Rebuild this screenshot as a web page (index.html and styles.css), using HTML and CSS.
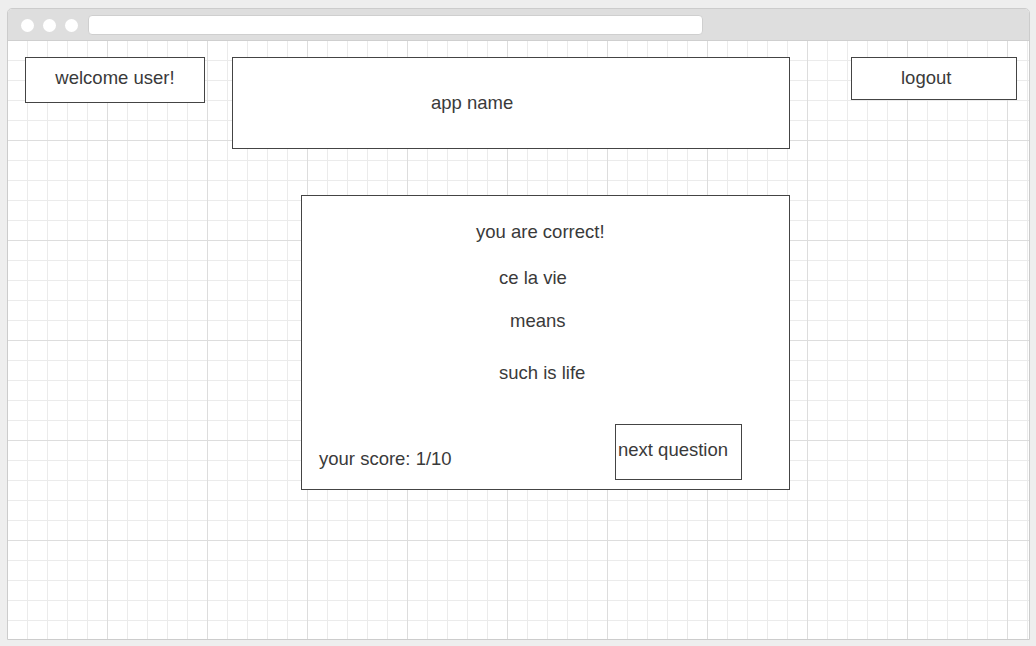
FILE: index.html
```html
<!DOCTYPE html>
<html lang="en">
<head>
<meta charset="utf-8">
<title>app name</title>
<link rel="stylesheet" href="styles.css">
</head>
<body>
<div class="window">
  <div class="titlebar">
    <div class="dots">
      <span class="dot"></span>
      <span class="dot"></span>
      <span class="dot"></span>
    </div>
    <div class="address"></div>
  </div>
  <div class="canvas">
    <header class="header">
      <div class="box welcome">welcome user!</div>
      <div class="box appname">app name</div>
      <div class="box logout">logout</div>
    </header>
    <section class="card">
      <div class="line l1">you are correct!</div>
      <div class="line l2">ce la vie</div>
      <div class="line l3">means</div>
      <div class="line l4">such is life</div>
      <div class="bottom">
        <div class="line score">your score: 1/10</div>
        <div class="box next">next question</div>
      </div>
    </section>
  </div>
</div>
</body>
</html>
```

FILE: styles.css
```css
* { box-sizing: border-box; }

html, body {
  margin: 0;
  padding: 0;
  background: #eeeeee;
}

body {
  font-family: "Liberation Sans", Arial, sans-serif;
  font-size: 18.5px;
  line-height: 20px;
  color: #3a3a3a;
}

.window {
  margin: 8px 0 0 7px;
  width: 1023px;
  height: 632px;
  border: 1px solid #cccccc;
  border-radius: 5px 5px 0 0;
  background: #ffffff;
  display: flex;
  flex-direction: column;
  overflow: hidden;
}

.titlebar {
  height: 32px;
  flex: none;
  background: #dedede;
  border-bottom: 1px solid #cfcfcf;
  display: flex;
  align-items: flex-start;
  padding: 10px 0 0 13px;
}

.dots {
  display: flex;
  gap: 9px;
}

.dot {
  width: 13px;
  height: 13px;
  border-radius: 50%;
  background: #ffffff;
}

.address {
  margin-left: 10px;
  margin-top: -4px;
  width: 615px;
  height: 20px;
  background: #ffffff;
  border: 1px solid #cfcfcf;
  border-radius: 4px;
}

.canvas {
  flex: 1;
  background-color: #ffffff;
  background-image:
    linear-gradient(to right, #dddddd 1px, transparent 1px),
    linear-gradient(to bottom, #dddddd 1px, transparent 1px),
    linear-gradient(to right, #ebebeb 1px, transparent 1px),
    linear-gradient(to bottom, #ebebeb 1px, transparent 1px);
  background-size: 100px 100px, 100px 100px, 20px 20px, 20px 20px;
  background-position: -1px -1px;
}

.box {
  border: 1px solid #444444;
  background: #ffffff;
}

.header {
  display: flex;
  align-items: flex-start;
  padding: 16px 0 0 17px;
}

.welcome {
  width: 180px;
  height: 46px;
  padding-top: 10px;
  text-align: center;
}

.appname {
  margin-left: 27px;
  width: 558px;
  height: 92px;
  padding: 35px 0 0 198px;
}

.logout {
  margin-left: 61px;
  width: 166px;
  height: 43px;
  padding: 10px 0 0 49px;
}

.card {
  margin: 46px 0 0 293px;
  width: 489px;
  height: 295px;
  border: 1px solid #444444;
  background: #ffffff;
  padding-top: 26px;
}

.line {
  height: 20px;
  white-space: nowrap;
}

.l1 { padding-left: 174px; }
.l2 { margin-top: 26px; padding-left: 197px; }
.l3 { margin-top: 23px; padding-left: 208px; }
.l4 { margin-top: 32px; padding-left: 197px; }

.bottom {
  display: flex;
  align-items: flex-start;
}

.score {
  margin-top: 66px;
  padding-left: 17px;
  width: 313px;
}

.next {
  margin-top: 41px;
  width: 127px;
  height: 56px;
  padding: 15px 0 0 2px;
  white-space: nowrap;
}
```
